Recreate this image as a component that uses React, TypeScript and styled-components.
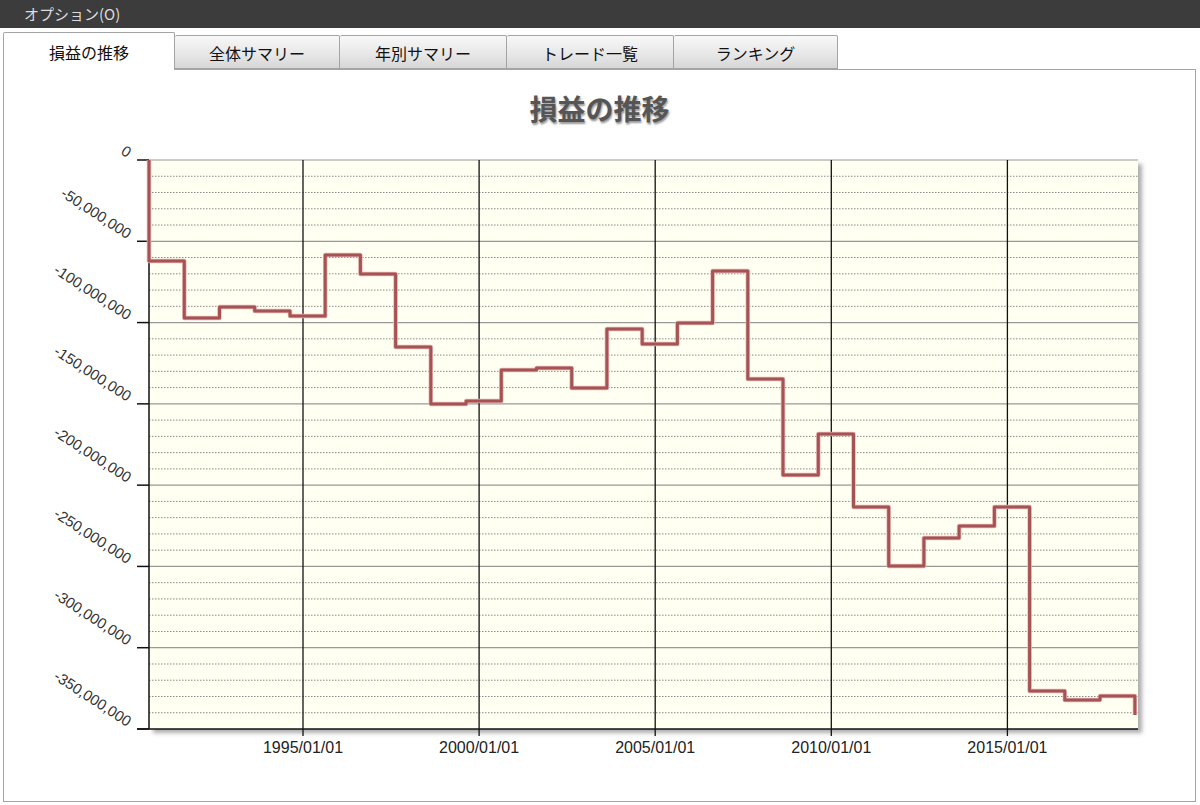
import styled, { createGlobalStyle } from 'styled-components';

const GlobalStyle = createGlobalStyle`
	html, body {
		margin: 0;
		padding: 0;
		background: #ffffff;
	}
	body {
		font-family: 'Liberation Sans', 'Noto Sans CJK JP', sans-serif;
	}
`;

type TabProps = {
	$active?: boolean;
	$width: number;
};

const Page = styled.div`
	display: flex;
	flex-direction: column;
	width: 1200px;
	height: 805px;
	overflow: hidden;
`;

const MenuBar = styled.div`
	height: 28px;
	line-height: 28px;
	padding-left: 24px;
	background-color: #3c3c3c;
	color: #dcdcdc;
	font-family: 'Noto Sans CJK JP', sans-serif;
	font-size: 15px;
`;

const TabStrip = styled.div`
	display: flex;
	align-items: flex-end;
	height: 37px;
	margin-top: 4px;
	padding-left: 3px;
`;

const Tab = styled.div<TabProps>`
	position: relative;
	z-index: ${(props) => (props.$active ? 1 : 0)};
	display: flex;
	justify-content: center;
	align-items: center;
	box-sizing: border-box;
	width: ${(props) => props.$width}px;
	height: ${(props) => (props.$active ? '38px' : '34px')};
	margin-bottom: ${(props) => (props.$active ? '-1px' : '0')};
	padding-top: ${(props) => (props.$active ? '0' : '2px')};

	background: ${(props) =>
		props.$active ? '#ffffff' : 'linear-gradient(#f8f8f8, #e6e6e6 60%, #d6d6d6)'};
	border: 1px solid #a4a4a4;
	border-bottom: ${(props) => (props.$active ? 'none' : '1px solid #a4a4a4')};
	border-left: ${(props) => (props.$active ? '1px solid #a4a4a4' : 'none')};
	border-radius: 2px 2px 0 0;

	color: #111;
	font-family: 'Noto Sans CJK JP', sans-serif;
	font-size: 16px;
`;

const Panel = styled.div`
	flex: 1;
	margin: 0 4px 3px 3px;
	border: 1px solid #a4a4a4;
	background-color: #ffffff;
`;

const Title = styled.div`
	height: 60px;
	padding-top: 8px;
	margin-bottom: 2px;
	line-height: 60px;
	text-align: center;
	color: #555555;
	font-family: 'Noto Sans CJK JP', sans-serif;
	font-size: 28px;
	font-weight: 700;
	text-shadow: 1px 2px 2px #999999;
`;

const ChartSvg = styled.svg`
	display: block;
	width: 1191px;
	height: 620px;
`;

// plot geometry (page coordinates)
const LEFT = 149;
const RIGHT = 1138;
const TOP = 160;
const BOTTOM = 729;
const PX_PER_YEAR = 35.22;
const X1995 = 303;
const PX_PER_50M = (BOTTOM - TOP) / 7;

const xOf = (year: number) => X1995 + (year - 1995) * PX_PER_YEAR;
const yOf = (millions: number) => TOP - (millions / 50) * PX_PER_50M;

// yearly balance, in millions, changing each August
const steps: number[] = [
	-62.1, -97.2, -90.4, -92.9, -96.0, -58.4, -70.1, -115.0, -150.1, -148.2, -129.2, -127.9,
	-140.2, -104.0, -113.2, -100.3, -68.3, -134.7, -193.8, -168.5, -213.4, -249.7, -232.5,
	-225.1, -213.4, -326.6, -332.2, -329.7,
];
const START = 1990.63;
const END = 2018.62;

const buildPath = () => {
	let d = `M${LEFT},${yOf(0)} V${yOf(steps[0]).toFixed(1)}`;
	steps.forEach((v, i) => {
		if (i === 0) return;
		const x = xOf(START + i).toFixed(1);
		d += ` H${x} V${yOf(v).toFixed(1)}`;
	});
	d += ` H${xOf(END).toFixed(1)} V${yOf(-341.4).toFixed(1)}`;
	return d;
};

const yTicks = [0, -50, -100, -150, -200, -250, -300, -350];
const minorTicks = Array.from({ length: 35 }, (_, i) => -(i * 10)).filter((v) => v % 50 !== 0);
const years = [1995, 2000, 2005, 2010, 2015];

const formatValue = (m: number) => (m === 0 ? '0' : `-${Math.abs(m)},000,000`);

const Chart = () => (
	<ChartSvg viewBox='4 140 1191 620'>
		<defs>
			<filter id='plotShadow' x='-5%' y='-5%' width='110%' height='110%'>
				<feDropShadow dx='4' dy='4' stdDeviation='2' floodColor='#777' floodOpacity='0.6' />
			</filter>
		</defs>
		<rect
			x={LEFT}
			y={TOP}
			width={RIGHT - LEFT}
			height={BOTTOM - TOP}
			fill='#fffff2'
			filter='url(#plotShadow)'
		/>
		{minorTicks.map((v) => (
			<line
				key={v}
				x1={LEFT}
				x2={RIGHT}
				y1={yOf(v)}
				y2={yOf(v)}
				stroke='#8a8a8a'
				strokeWidth={1}
				strokeDasharray='1.5 1.5'
			/>
		))}
		{yTicks.slice(0, -1).map((v) => (
			<line key={v} x1={LEFT} x2={RIGHT} y1={yOf(v)} y2={yOf(v)} stroke='#999' strokeWidth={1.2} />
		))}
		{years.map((y) => (
			<line key={y} x1={xOf(y)} x2={xOf(y)} y1={TOP} y2={BOTTOM + 7} stroke='#111' strokeWidth={1.3} />
		))}
		<line x1={LEFT} x2={LEFT} y1={TOP} y2={BOTTOM} stroke='#111' strokeWidth={1.5} />
		<line x1={LEFT - 12} x2={RIGHT} y1={BOTTOM} y2={BOTTOM} stroke='#111' strokeWidth={1.5} />
		{yTicks.map((v) => (
			<line key={v} x1={LEFT - 12} x2={LEFT} y1={yOf(v)} y2={yOf(v)} stroke='#111' strokeWidth={1.5} />
		))}
		<path d={buildPath()} fill='none' stroke='#e8b8b8' strokeWidth={4.5} strokeLinejoin='round' />
		<path d={buildPath()} fill='none' stroke='#a65353' strokeWidth={3} strokeLinejoin='round' />
		{yTicks.map((v) => (
			<text
				key={v}
				x={127}
				y={yOf(v) - 2}
				textAnchor='end'
				fontFamily='Liberation Sans, sans-serif'
				fontSize={15}
				fill='#333'
				transform={`rotate(33 127 ${yOf(v) - 2})`}
			>
				{formatValue(v)}
			</text>
		))}
		{years.map((y) => (
			<text
				key={y}
				x={xOf(y)}
				y={753}
				textAnchor='middle'
				fontFamily='Liberation Sans, sans-serif'
				fontSize={16}
				fill='#222'
			>
				{`${y}/01/01`}
			</text>
		))}
	</ChartSvg>
);

const tabs = [
	{ label: '損益の推移', width: 172, active: true },
	{ label: '全体サマリー', width: 165 },
	{ label: '年別サマリー', width: 167 },
	{ label: 'トレード一覧', width: 167 },
	{ label: 'ランキング', width: 164 },
];

const App = () => (
	<>
		<GlobalStyle />
		<Page>
			<MenuBar>オプション(O)</MenuBar>
			<TabStrip>
				{tabs.map((tab) => (
					<Tab key={tab.label} $active={tab.active} $width={tab.width}>
						{tab.label}
					</Tab>
				))}
			</TabStrip>
			<Panel>
				<Title>損益の推移</Title>
				<Chart />
			</Panel>
		</Page>
	</>
);

export default App;
